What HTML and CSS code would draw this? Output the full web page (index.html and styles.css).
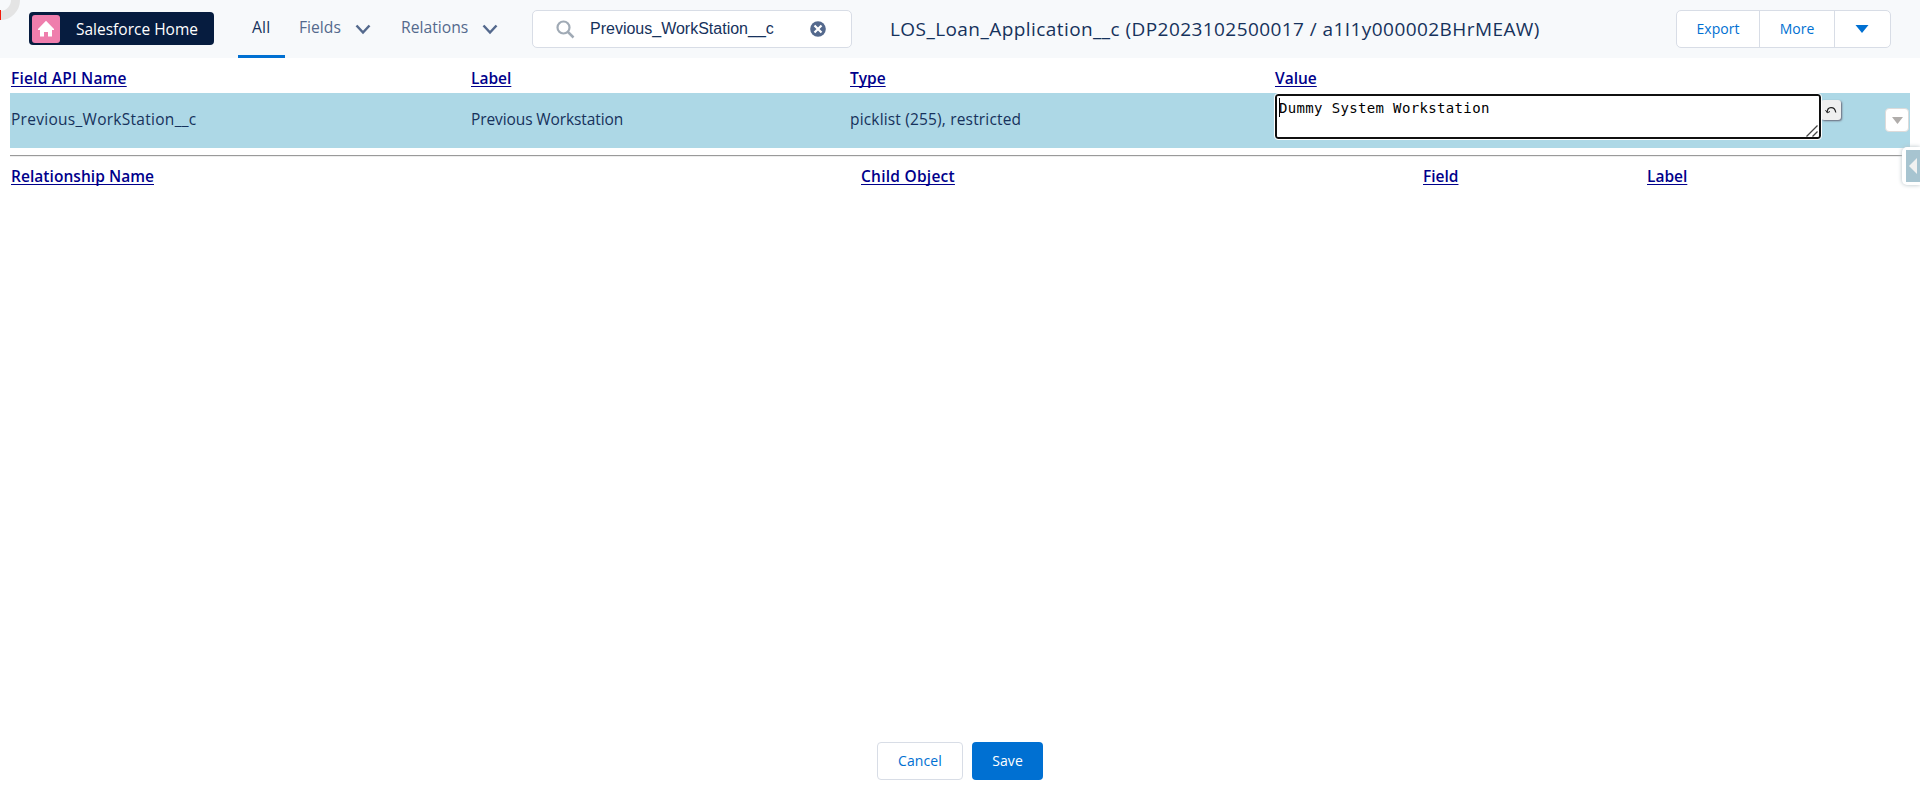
FILE: index.html
```html
<!DOCTYPE html>
<html lang="en">
<head>
<meta charset="utf-8">
<title>All Data</title>
<link rel="stylesheet" href="styles.css">
</head>
<body>
<header class="topbar">
  <a class="home"><span class="home-icon"><svg width="18" height="18" viewBox="0 0 18 18"><path d="M9 .8 17 9v1h-2v6.600h-4V12H7v4.600H3V10H1V9z" fill="#fff"/></svg></span><span class="home-label">Salesforce Home</span></a>
  <nav class="tabs">
    <a class="tab active"><span class="t-all">All</span></a>
    <a class="tab fields"><span class="t-fields">Fields</span><svg class="chev" width="16" height="11" viewBox="0 0 16 11"><path d="M1.500 1.500 8 8.500l6.500-7" fill="none" stroke="#54698d" stroke-width="2.500"/></svg></a>
    <a class="tab relations"><span class="t-relations">Relations</span><svg class="chev" width="16" height="11" viewBox="0 0 16 11"><path d="M1.500 1.500 8 8.500l6.500-7" fill="none" stroke="#54698d" stroke-width="2.500"/></svg></a>
  </nav>
  <div class="search">
    <svg width="19" height="19" viewBox="0 0 19 19"><circle cx="7.500" cy="7.500" r="6" fill="none" stroke="#a0aab5" stroke-width="2.200"/><path d="m12 12 5.500 5.500" stroke="#a0aab5" stroke-width="2.500"/></svg>
    <span class="query">Previous_WorkStation__c</span>
    <svg class="clear" width="16" height="16" viewBox="0 0 16 16"><circle cx="8" cy="8" r="7.800" fill="#54698d"/><path d="m4.500 4.500 7 7m0-7-7 7" stroke="#fff" stroke-width="2.200"/></svg>
  </div>
  <h1 class="title">LOS_Loan_Application__c (DP2023102500017 / a1I1y000002BHrMEAW)</h1>
  <div class="actions">
    <a class="act export"><span>Export</span></a>
    <a class="act more"><span>More</span></a>
    <a class="act drop"><svg width="14" height="8" viewBox="0 0 14 8"><path d="M.5 0h13L7 8z" fill="#0070d2"/></svg></a>
  </div>
</header>
<main class="data">
  <div class="row head fields-grid"><a class="h-api">Field API Name</a><a>Label</a><a>Type</a><a>Value</a></div>
  <div class="row record fields-grid">
    <span class="c-api">Previous_WorkStation__c</span><span class="c-label">Previous Workstation</span><span class="c-type">picklist (255), restricted</span>
    <div class="edit">
      <div class="editor"><i class="caret"></i><span>Dummy System Workstation</span><svg class="grip" width="12" height="12" viewBox="0 0 12 12"><path d="M.5 11.500 11.500.500M6.500 11.500l5-5" stroke="#444" stroke-width="1.300"/></svg></div>
      <span class="undo"><svg width="12" height="8" viewBox="0 0 12 8"><path d="M2.200 6.500C2 .500 9.500-.500 10.800 6.500" fill="none" stroke="#222" stroke-width="1.200"/><path d="M.500 4.200 2.300 6.800 5 5.500" fill="none" stroke="#222"/></svg></span>
      <span class="menu"><svg width="11" height="7" viewBox="0 0 11 7"><path d="M0 0h11L5.500 7z" fill="#b0adab"/></svg></span>
    </div>
  </div>
  <hr class="rule">
  <div class="row head rel-grid"><a class="h-rel">Relationship Name</a><a class="h-child">Child Object</a><a>Field</a><a>Label</a></div>
</main>
<footer class="footer"><a class="btn cancel"><span>Cancel</span></a><a class="btn save"><span>Save</span></a></footer>
<svg class="spinner" width="20" height="20" viewBox="0 0 20 20"><path d="M15.500 0A15.500 15.500 0 0 1 0 15.500" fill="none" stroke="#e4e4e4" stroke-width="9"/><path d="M0 10h1v10H0z" fill="#f21b0c"/></svg>
<div class="inspector"><div class="inspector-btn"><svg width="9" height="16" viewBox="0 0 9 16"><path d="M8 0v16L0 8z" fill="#f1f1f1"/></svg></div></div>
</body>
</html>
```
FILE: styles.css
```css
* { box-sizing: border-box; }
body { margin: 0; height: 800px; overflow: hidden; background: #fff; color: #16325c; font: 16px/24px "Open Sans", "Noto Sans", sans-serif; display: flex; flex-direction: column; }
a { color: inherit; white-space: nowrap; }
span { white-space: nowrap; }
svg { display: block; flex: none; }
.topbar { height: 58px; flex: none; background: #f7f9fb; display: flex; align-items: flex-start; padding: 0 29px; }
.home { margin-top: 12px; width: 185px; height: 33px; background: #061c3f; border-radius: 4px; display: flex; align-items: center; padding-left: 3px; color: #fff; }
.home-icon { width: 28px; height: 28px; background: #ef7ead; border-radius: 3px; display: grid; place-items: center; }
.home-label { margin-left: 16px; font-weight: 500; font-size: 15.500px; }
.tabs { display: flex; margin-left: 24px; height: 58px; }
.tab { display: flex; align-items: flex-start; padding-top: 15px; color: #54698d; font-size: 15.700px; }
.active { width: 47px; padding-left: 14px; color: #16325c; border-bottom: 3px solid #0070d2; letter-spacing: .2px; }
.fields { width: 102px; padding-left: 14px; }
.relations { width: 145px; padding-left: 14px; }
.chev { margin: 9px 0 0 auto; }
.relations .chev { margin-right: 34px; }
.fields .chev { margin-right: 16px; }
.search { margin-top: 10px; width: 320px; height: 38px; background: #fff; border: 1px solid #d8dde6; border-radius: 5px; display: flex; align-items: center; padding-left: 23px; }
.query { width: 220px; margin-left: 15px; font-family: "Liberation Sans", sans-serif; }
.title { margin: 17px 0 0 38px; width: 660px; font-size: 19px; line-height: 24px; font-weight: 400; white-space: nowrap; letter-spacing: .43px; }
.actions { margin: 10px 0 0 auto; width: 215px; height: 38px; flex: none; display: flex; background: #fff; border: 1px solid #d8dde6; border-radius: 5px; color: #0070d2; font-size: 14px; }
.act { display: grid; place-items: center; }
.export { width: 83px; border-right: 1px solid #d8dde6; }
.more { width: 75px; border-right: 1px solid #d8dde6; }
.drop { flex: 1; padding-right: 2px; }
.data { flex: 1; padding: 8px 10px 0; }
.row { display: grid; }
.fields-grid { grid-template-columns: 460px 379px 425px 1fr; }
.rel-grid { grid-template-columns: 850px 562px 224px 1fr; }
.head { height: 27px; padding-left: 1px; color: #00008b; font-weight: 600; font-size: 15.500px; text-decoration: underline; text-underline-offset: 2px; text-decoration-skip-ink: none; }
.h-api { letter-spacing: .2px; }
.h-rel { letter-spacing: .05px; }
.h-child { letter-spacing: .25px; }
.record { height: 55px; padding-left: 1px; background: #add8e6; align-items: center; font-size: 15.500px; }
.record > span { padding-bottom: 3px; }
.c-api { letter-spacing: .28px; }
.c-label { letter-spacing: -.1px; }
.c-type { letter-spacing: .17px; }
.edit { display: flex; height: 55px; }
.editor { position: relative; margin: 1px 0 0; width: 546px; height: 45px; border: 2px solid #101010; outline: 1px solid #fff; border-radius: 3px; background: #fff; padding: 2px; color: #000; font: 14px/20px "DejaVu Sans Mono", monospace; letter-spacing: .35px; }
.caret { position: absolute; left: 2px; top: 2px; width: 1px; height: 19px; background: #000; }
.grip { position: absolute; right: 1px; bottom: 0; }
.undo { margin-top: 7px; width: 20px; height: 20px; background: #efefef; border-radius: 3px; box-shadow: 1px 1px 2px #667; display: grid; place-items: center; }
.menu { margin: 15px 1px 0 auto; width: 24px; height: 24px; background: #fff; border: 1px solid #dddbda; border-radius: 4px; display: grid; place-items: center; }
.rule { height: 2px; margin: 7px 0 7px; border: 0; border-top: 1px solid #9a9a9a; border-bottom: 1px solid #eee; }
.footer { height: 57px; flex: none; display: flex; justify-content: center; gap: 9px; font-size: 14px; position: relative; }
.footer { height: 58px; letter-spacing: .1px; }
.btn { height: 38px; border-radius: 4px; display: grid; place-items: center; }
.cancel { width: 86px; border: 1px solid #d8dde6; color: #0070d2; }
.save { width: 71px; background: #0070d2; color: #fff; font-weight: 500; }
.spinner { position: absolute; left: 0; top: 0; }
.inspector { position: absolute; right: 0; top: 147px; width: 18px; height: 38px; border-radius: 5px 0 0 5px; box-shadow: 0 0 4px #b4bfc4; background: #fff; padding: 3px 0 3px 4px; }
.inspector-btn { height: 32px; background: #a7c4d0; display: grid; place-items: center; }
```
